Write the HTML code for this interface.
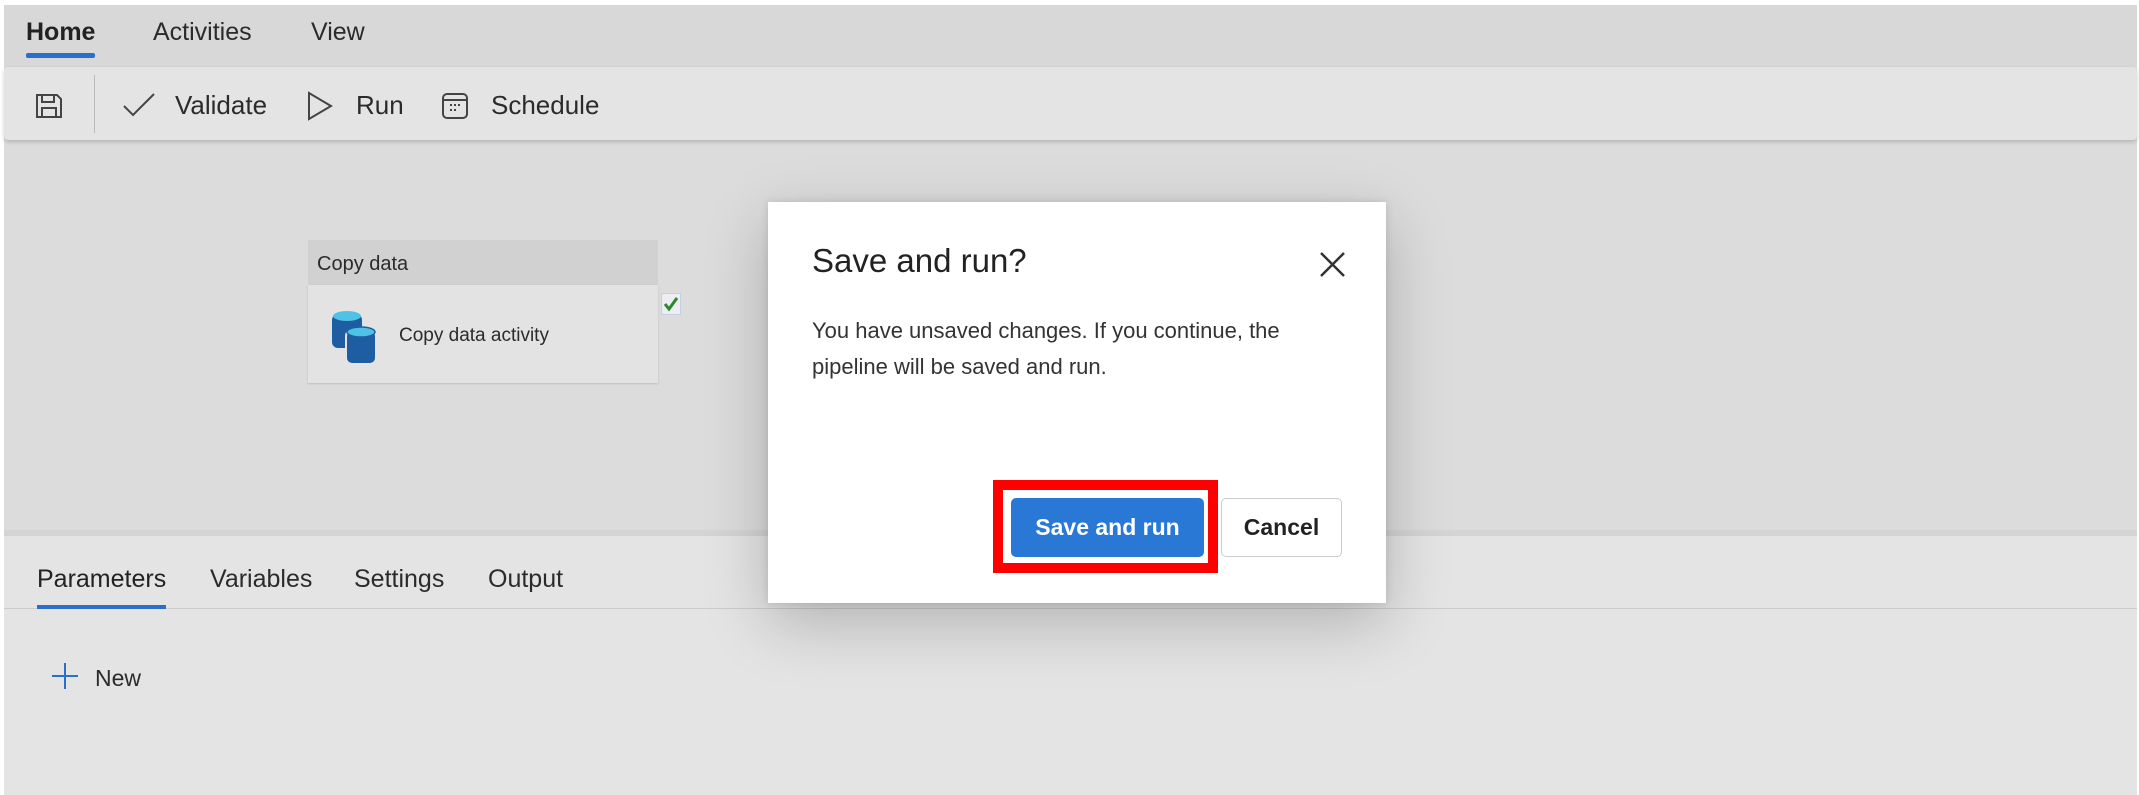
<!DOCTYPE html>
<html><head><style>
*{margin:0;padding:0;box-sizing:border-box}
body{width:2139px;height:795px;overflow:hidden;background:#fff;font-family:"Liberation Sans",sans-serif;position:relative;color:#2b2b2b}
.a{position:absolute}
.t{position:absolute;white-space:nowrap;line-height:1}
</style></head><body>
<div class="a" style="left:4px;top:5px;width:2133px;height:790px;background:#dcdcdc"></div>
<!-- tab bar -->
<div class="a" style="left:4px;top:5px;width:2133px;height:62px;background:#d8d8d8"></div>
<div class="t" style="left:26px;top:20px;font-size:25px;font-weight:bold;color:#222">Home</div>
<div class="a" style="left:26px;top:53px;width:69px;height:5px;background:#2a6fc9;border-radius:2px"></div>
<div class="t" style="left:153px;top:20px;font-size:25px">Activities</div>
<div class="t" style="left:311px;top:20px;font-size:25px">View</div>
<!-- toolbar -->
<div class="a" style="left:4px;top:67px;width:2133px;height:73px;background:#e4e4e4;box-shadow:0 2px 4px rgba(0,0,0,.18);border-radius:4px"></div>
<svg class="a" style="left:34px;top:92px" width="30" height="28" viewBox="0 0 30 28" fill="none" stroke="#444" stroke-width="2"><path d="M3 3h20l4 4v18H3z"/><path d="M8 3v7h12V3M8 25v-9h14v9"/></svg>
<div class="a" style="left:94px;top:75px;width:1px;height:58px;background:#bbb"></div>
<svg class="a" style="left:122px;top:92px" width="34" height="26" viewBox="0 0 34 26" fill="none" stroke="#444" stroke-width="2"><path d="M2 14l9 9L32 2"/></svg>
<div class="t" style="left:175px;top:92px;font-size:26px">Validate</div>
<svg class="a" style="left:306px;top:91px" width="28" height="30" viewBox="0 0 28 30" fill="none" stroke="#444" stroke-width="2"><path d="M3 2v26l22-13z"/></svg>
<div class="t" style="left:356px;top:92px;font-size:26px">Run</div>
<svg class="a" style="left:441px;top:92px" width="28" height="28" viewBox="0 0 28 28" fill="none" stroke="#444" stroke-width="2"><rect x="2" y="2" width="24" height="24" rx="4"/><path d="M2 8h24"/><path d="M9 13h2M13 13h2M17 13h2M9 18h2M13 18h2" stroke-width="2"/></svg>
<div class="t" style="left:491px;top:92px;font-size:26px">Schedule</div>
<!-- node -->
<div class="a" style="left:308px;top:240px;width:350px;height:45px;background:#d1d1d1"></div>
<div class="t" style="left:317px;top:254px;font-size:20px">Copy data</div>
<div class="a" style="left:308px;top:285px;width:350px;height:98px;background:#e3e3e3;box-shadow:0 1px 2px rgba(0,0,0,.15)"></div>
<svg class="a" style="left:330px;top:310px" width="50" height="56" viewBox="0 0 50 56"><rect x="2" y="4" width="30" height="34" rx="6" fill="#1f5da3"/><ellipse cx="17" cy="6" rx="14" ry="5" fill="#4fc3e6"/><rect x="16" y="20" width="30" height="34" rx="6" fill="#1f5da3" stroke="#e3e3e3" stroke-width="2"/><ellipse cx="31" cy="22" rx="14" ry="5" fill="#4fc3e6" stroke="#1f5da3" stroke-width="1.5"/></svg>
<div class="t" style="left:399px;top:326px;font-size:19px">Copy data activity</div>
<div class="a" style="left:661px;top:293px;width:20px;height:22px;border:1px solid #c8cfe0;background:#eceef4"></div>
<svg class="a" style="left:663px;top:296px" width="16" height="16" viewBox="0 0 16 16" fill="none" stroke="#2a8a2a" stroke-width="3"><path d="M2 8l4 5 8-11"/></svg>
<!-- bottom panel -->
<div class="a" style="left:4px;top:530px;width:2133px;height:6px;background:#d4d4d4"></div>
<div class="a" style="left:4px;top:536px;width:2133px;height:259px;background:#e4e4e4"></div>
<div class="t" style="left:37px;top:567px;font-size:25px;color:#222">Parameters</div>
<div class="t" style="left:210px;top:567px;font-size:25px">Variables</div>
<div class="t" style="left:354px;top:567px;font-size:25px">Settings</div>
<div class="t" style="left:488px;top:567px;font-size:25px">Output</div>
<div class="a" style="left:4px;top:608px;width:2133px;height:1px;background:#ccc"></div>
<div class="a" style="left:37px;top:605px;width:129px;height:4px;background:#2a6fc9"></div>
<svg class="a" style="left:51px;top:662px" width="28" height="28" viewBox="0 0 28 28" stroke="#2a6fc9" stroke-width="2"><path d="M14 1v26M1 14h26"/></svg>
<div class="t" style="left:95px;top:667px;font-size:23px">New</div>
<!-- dialog -->
<div class="a" style="left:768px;top:202px;width:618px;height:401px;background:#fff;box-shadow:0 20px 60px rgba(0,0,0,.22),0 0 8px rgba(0,0,0,.12)"></div>
<div class="t" style="left:812px;top:244px;font-size:33px;color:#222">Save and run?</div>
<svg class="a" style="left:1319px;top:251px" width="27" height="27" viewBox="0 0 27 27" stroke="#333" stroke-width="2.5"><path d="M2 2l23 23M25 2L2 25"/></svg>
<div class="t" style="left:812px;top:320px;font-size:22px;color:#333">You have unsaved changes. If you continue, the</div>
<div class="t" style="left:812px;top:356px;font-size:22px;color:#333">pipeline will be saved and run.</div>
<div class="a" style="left:993px;top:480px;width:225px;height:93px;border:10px solid #ff0000;background:#fff"></div>
<div class="a" style="left:1011px;top:498px;width:193px;height:59px;background:#2a78d6;border-radius:5px;color:#fff;font-size:23px;font-weight:bold;text-align:center;line-height:59px">Save and run</div>
<div class="a" style="left:1221px;top:498px;width:121px;height:59px;background:#fff;border:1.5px solid #ccc;border-radius:5px;color:#222;font-size:23px;font-weight:bold;text-align:center;line-height:56px">Cancel</div>
</body></html>
